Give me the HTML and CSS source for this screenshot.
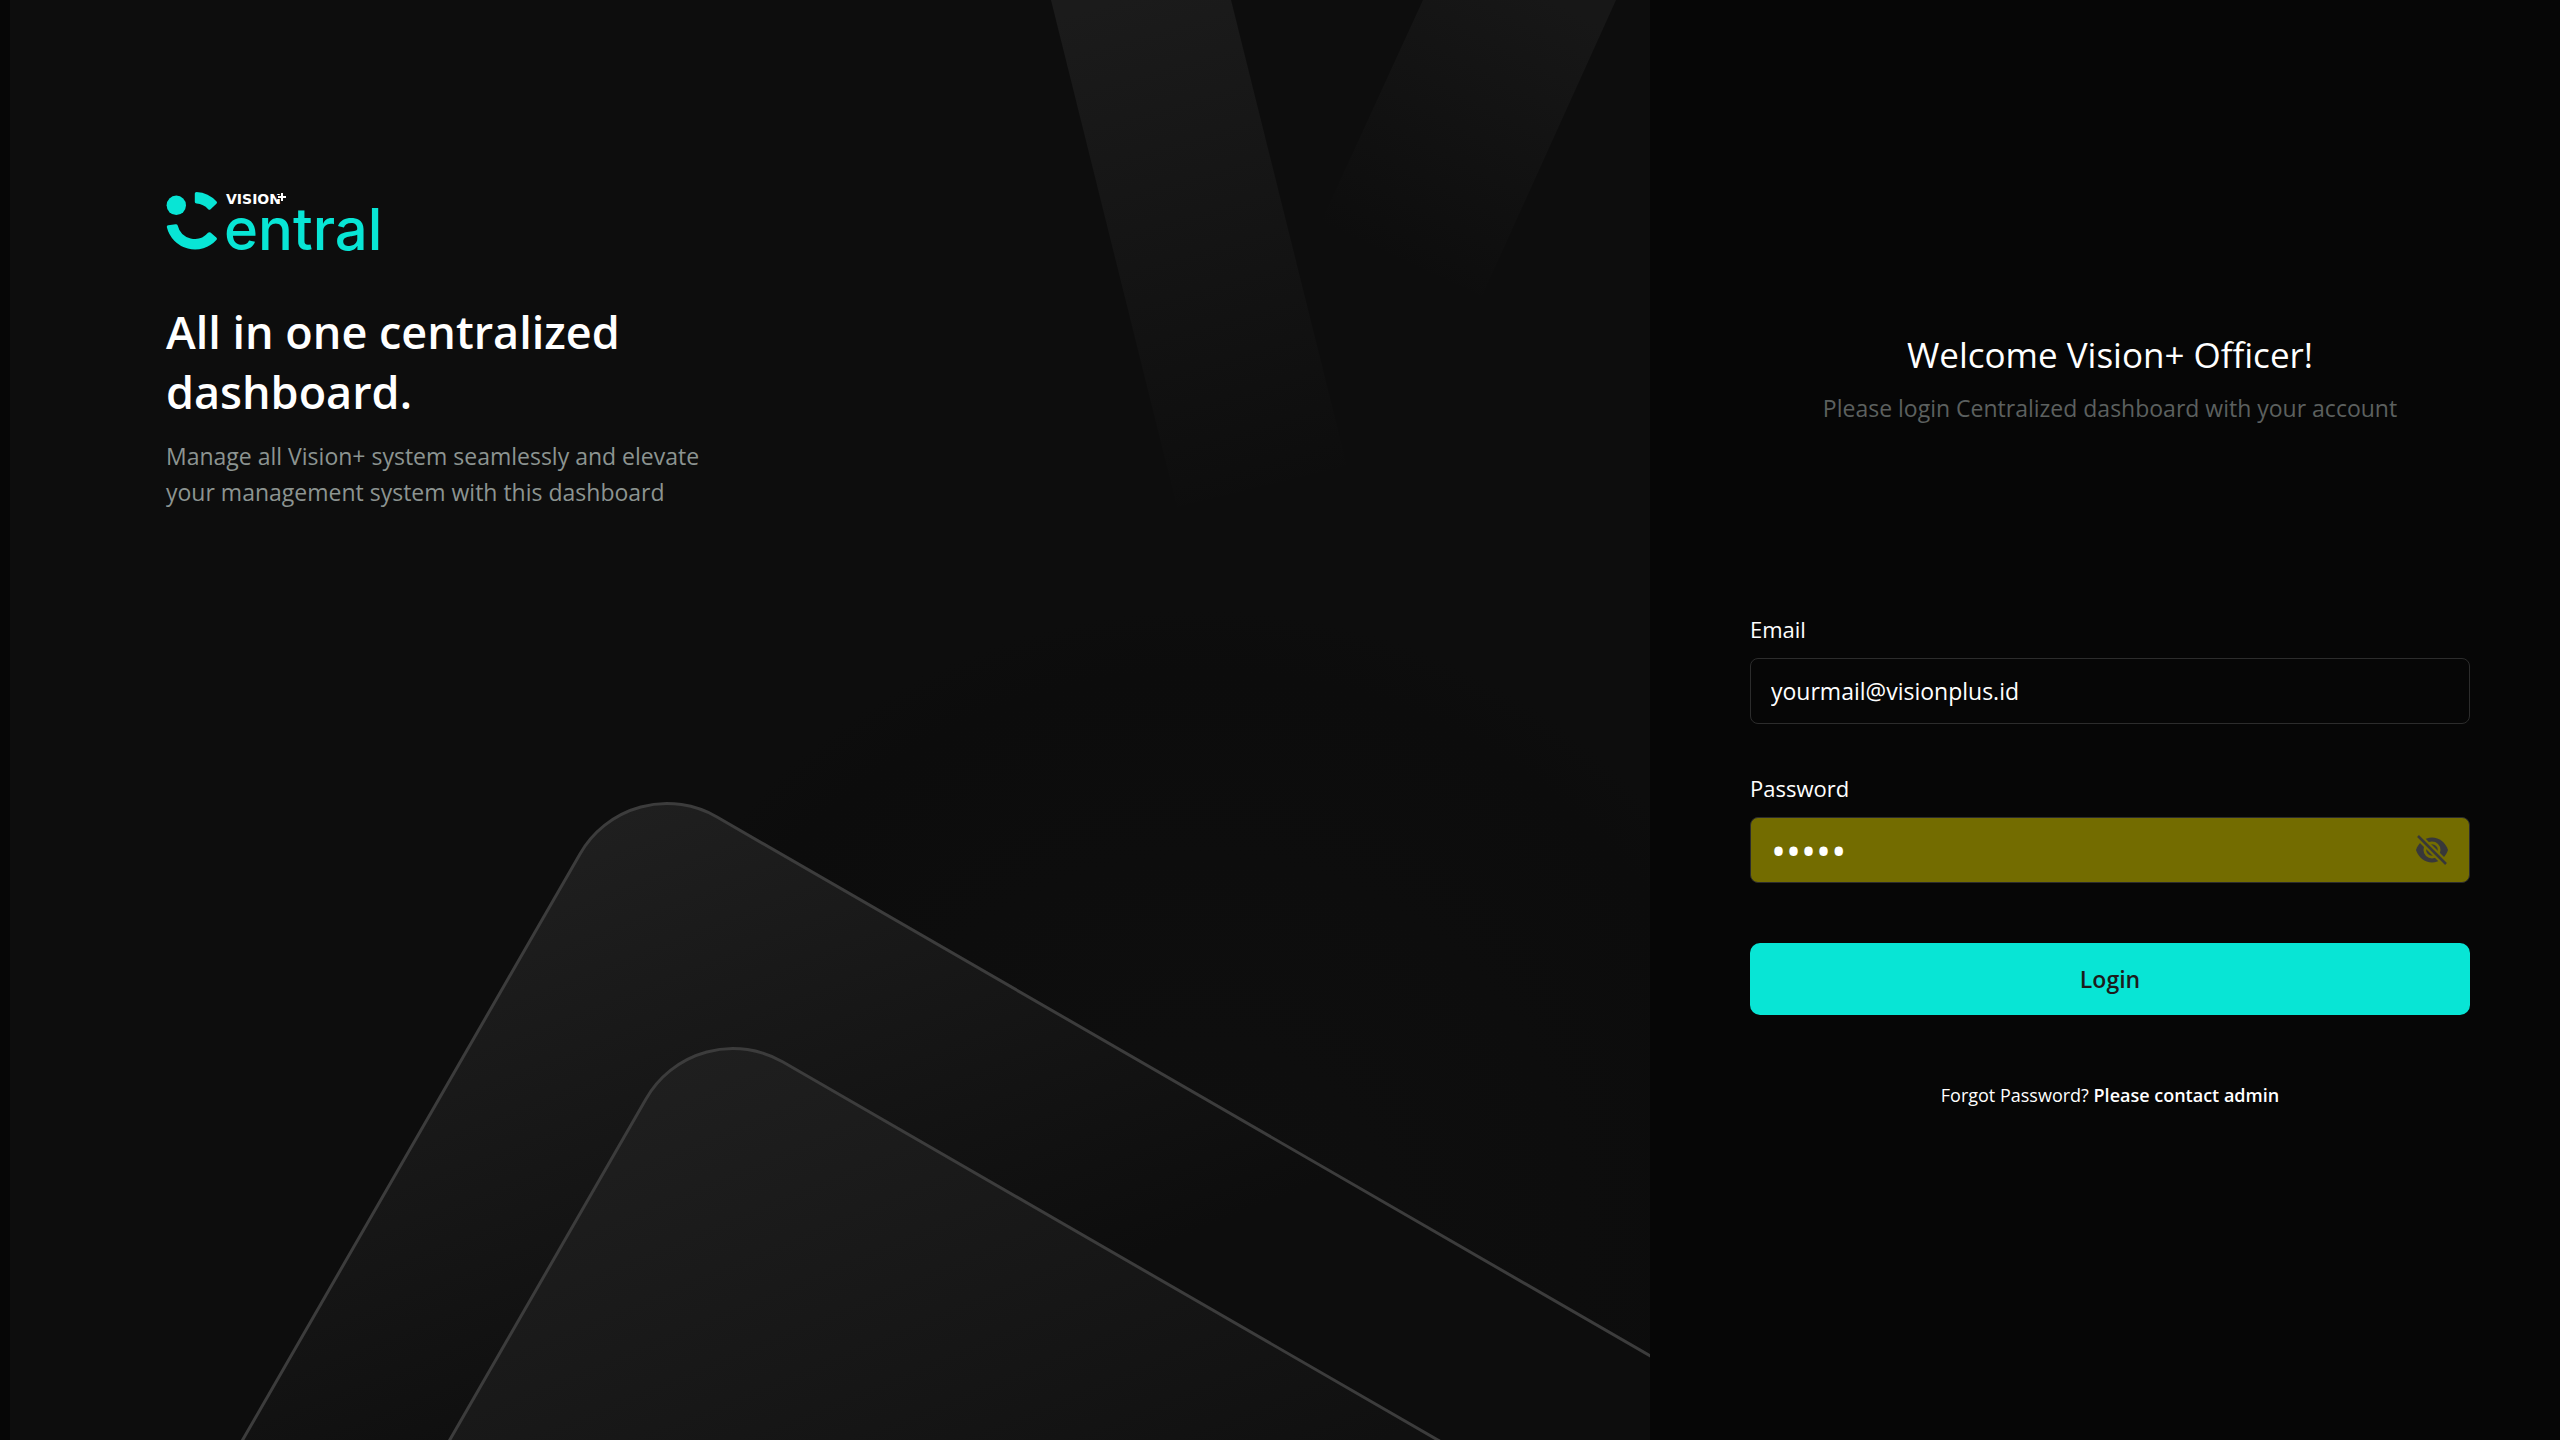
FILE: index.html
```html
<!DOCTYPE html>
<html lang="en">
<head>
<meta charset="utf-8">
<title>Vision+ Central</title>
<link rel="stylesheet" href="styles.css">
</head>
<body>
<div class="page">
  <section class="intro">
    <svg class="backdrop" viewBox="0 0 1640 1440" preserveAspectRatio="xMinYMin slice" aria-hidden="true">
      <defs>
        <linearGradient id="beamLeft" gradientUnits="userSpaceOnUse" x1="1110" y1="0" x2="1250" y2="500">
          <stop offset="0" stop-color="#1b1b1b"/><stop offset="1" stop-color="#0d0d0d"/>
        </linearGradient>
        <linearGradient id="beamRight" gradientUnits="userSpaceOnUse" x1="1540" y1="0" x2="1400" y2="270">
          <stop offset="0" stop-color="#171717"/><stop offset="1" stop-color="#0d0d0d"/>
        </linearGradient>
        <linearGradient id="cardBack" gradientUnits="userSpaceOnUse" x1="640" y1="800" x2="860" y2="1360">
          <stop offset="0" stop-color="#1f1f1f"/><stop offset="1" stop-color="#0d0d0d"/>
        </linearGradient>
        <linearGradient id="cardFront" gradientUnits="userSpaceOnUse" x1="700" y1="1040" x2="940" y2="1620">
          <stop offset="0" stop-color="#1f1f1f"/><stop offset="1" stop-color="#101010"/>
        </linearGradient>
        <radialGradient id="glow" gradientUnits="userSpaceOnUse" cx="1190" cy="1230" r="620">
          <stop offset="0" stop-color="#0f0f0f"/><stop offset=".6" stop-color="#0d0d0d"/><stop offset=".9" stop-color="#0c0c0c"/><stop offset="1" stop-color="#0d0d0d"/>
        </radialGradient>
      </defs>
      <circle cx="1190" cy="1230" r="620" fill="url(#glow)"/>
      <path fill="url(#beamLeft)" d="M1041 0H1221L1337 466L1167 507Z"/>
      <path fill="url(#beamRight)" d="M1413 0H1606L1472 296L1311 222Z"/>
      <path class="card-line" fill="url(#cardBack)" d="M232 1441L570 854A100 100 0 0 1 707 817L1642 1357V1445H232Z"/>
      <path class="card-line" fill="url(#cardFront)" d="M438 1443L636 1099A100 100 0 0 1 773 1062L1433 1443Z"/>
    </svg>
    <svg class="logo" viewBox="0 0 216 64" role="img" aria-label="Vision+ Central">
      <g fill="#08e5d5">
        <circle cx="10.3" cy="15.3" r="9.7"/>
        <path d="M30.5 2A29 29 0 0 1 50.6 11.6Q51.6 12.8 50.4 13.8L44.6 19.3Q43.4 20.4 42.2 19.2A17.5 17.5 0 0 0 30.5 13.6Q28.8 13.4 28.8 12V3.6Q28.8 2 30.5 2Z"/>
        <path d="M2.2 35.2L9.6 34.2Q11.2 34 11.7 35.5A17.5 17.5 0 0 0 42 42.8Q43.2 41.6 44.5 42.6L50.3 47.4Q51.6 48.6 50.6 49.8A29 29 0 0 1 .8 37Q.6 35.4 2.2 35.2Z"/>
      </g>
      <text class="logo-name" x="58" y="60">entral</text>
      <text class="logo-brand" x="60" y="14">VISION</text>
      <path d="M115 3h2v3h3v2h-3v3h-2v-3h-3v-2h3z" fill="#fff" stroke="#0d0d0d" stroke-width="2" paint-order="stroke"/>
    </svg>
    <h1 class="headline">All in one centralized dashboard.</h1>
    <p class="lead">Manage all Vision+ system seamlessly and elevate your management system with this dashboard</p>
  </section>
  <main class="login">
    <header class="welcome">
      <h2 class="welcome-title">Welcome Vision+ Officer!</h2>
      <p class="welcome-note">Please login Centralized dashboard with your account</p>
    </header>
    <form class="form">
      <div class="field">
        <label for="email">Email</label>
        <input class="input" id="email" type="email" value="yourmail@visionplus.id">
      </div>
      <div class="field">
        <label for="password">Password</label>
        <div class="password">
          <input class="input input-filled" id="password" type="password" value="admin">
          <button class="toggle" type="button" aria-label="Show password">
            <svg viewBox="0 0 32 32" aria-hidden="true">
              <path fill="#38383a" d="M16 3.500C8.500 3.500 2.500 8.500 0 16c2.500 7.500 8.500 12.500 16 12.500S29.500 23.500 32 16C29.500 8.500 23.500 3.500 16 3.500z"/>
              <circle cx="16" cy="16" r="8.500" fill="#736c00"/>
              <circle cx="16" cy="16" r="5.800" fill="#38383a"/>
              <path d="M2 2L30 30" stroke="#736c00" stroke-width="7"/>
              <path d="M2 2L30 30" stroke="#38383a" stroke-width="2.500"/>
            </svg>
          </button>
        </div>
      </div>
      <button class="submit" type="submit">Login</button>
    </form>
    <p class="help">Forgot Password? <a href="#contact">Please contact admin</a></p>
  </main>
</div>
</body>
</html>
```
FILE: styles.css
```css
* { box-sizing: border-box; }
body { margin: 0; background: #060606; color: #fff; font-family: "Segoe UI", "Open Sans", "Noto Sans", sans-serif; font-size: 22px; line-height: 32px; }
h1, h2, p { margin: 0; }
.page { display: grid; grid-template-columns: 1640fr 910fr; min-height: 100vh; padding-left: 10px; }
.intro { position: relative; overflow: hidden; background: #0d0d0d; padding: 190px 156px; }
.backdrop { position: absolute; inset: 0; width: 100%; height: 100%; }
.card-line { stroke: #3c3c3c; stroke-width: 3; }
.logo, .headline, .lead { position: relative; display: block; }
.logo { width: 216px; height: 64px; overflow: visible; }
.logo-name { font: 500 58px Inter, sans-serif; fill: #08e5d5; }
.logo-brand { font: 700 14px "DejaVu Sans", sans-serif; fill: #fff; }
.headline { max-width: 540px; margin-top: 48px; font-size: 45px; line-height: 60px; font-weight: 600; }
.lead { max-width: 560px; margin-top: 16px; font-size: 23px; line-height: 36px; color: #8c9491; }
.login { padding: 330px 90px 0 100px; }
.welcome { text-align: center; }
.welcome-title { font-size: 35px; line-height: 50px; font-weight: 400; }
.welcome-note { margin-top: 12px; font-size: 23px; color: #5c605f; }
.form { display: grid; gap: 48px; margin-top: 189px; }
.field { display: grid; gap: 13px; }
.input { display: block; width: 100%; height: 66px; padding: 0 20px; border: 1px solid #2c2c2c; border-radius: 8px; background: transparent; color: #fff; font: inherit; font-size: 23px; outline: 0; }
.input-filled { background: #736c00; padding-right: 72px; font-size: 40px; }
.password { position: relative; }
.toggle { position: absolute; top: 17px; right: 22px; padding: 0; border: 0; background: none; }
.toggle svg { display: block; width: 32px; height: 32px; }
.submit { height: 72px; margin-top: 12px; border: 0; border-radius: 10px; background: #08e5d5; color: #1c1c1c; font: inherit; font-size: 23px; font-weight: 600; }
.help { margin-top: 64px; text-align: center; font-size: 18px; }
.help a { color: inherit; font-weight: 600; text-decoration: none; }
```
